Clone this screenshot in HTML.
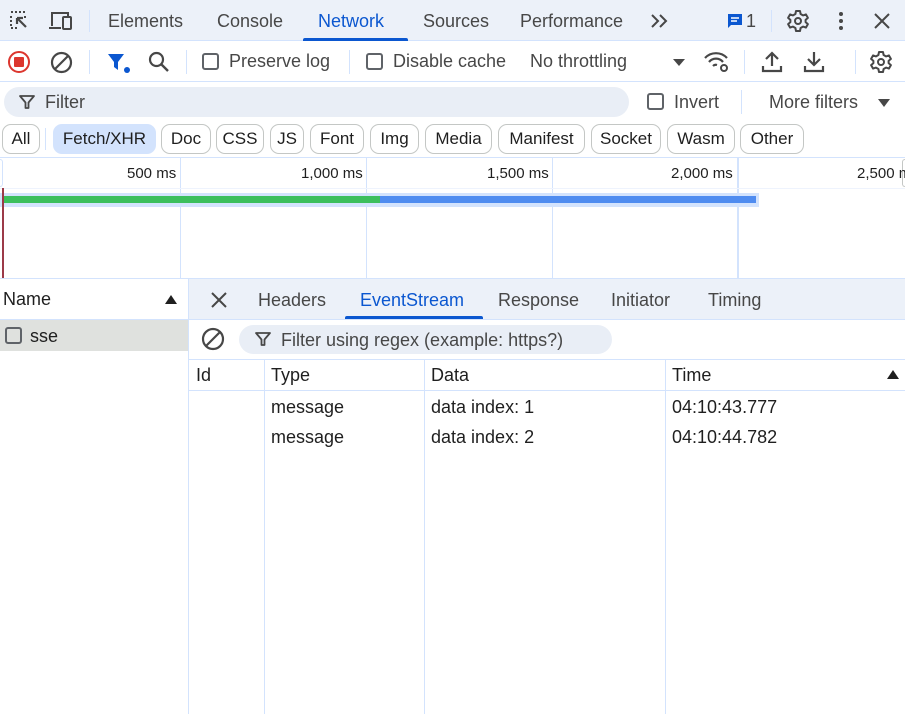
<!DOCTYPE html>
<html><head><meta charset="utf-8"><style>
*{box-sizing:border-box;margin:0;padding:0}
body{width:905px;height:714px;overflow:hidden;background:#fff;font-family:"Liberation Sans","Noto Sans CJK SC",sans-serif;color:#1f1f1f;position:relative;font-size:18px}
.a{position:absolute;white-space:nowrap}
.t{color:#474747}
.ln{position:absolute;background:#d3e3fd}
.chip{position:absolute;top:124px;height:30px;border:1px solid #c4c7c5;border-radius:9px;line-height:28px;font-size:17px;color:#1f1f1f;text-align:center;overflow:hidden}
.cb{position:absolute;width:17px;height:17px;border:2px solid #5f6368;border-radius:3px}
svg{position:absolute}
</style></head><body>
<!-- tab bar -->
<div class="a" style="left:0;top:0;width:905px;height:41px;background:#ecf1f9;border-bottom:1px solid #d3e3fd"></div>
<svg style="left:8px;top:9px" width="24" height="24" viewBox="0 0 24 24"><path d="M3 3h2M7 3h2M11 3h2M15 3h2M3 7v2M3 11v2M3 15v2M3 19h2M7 19h2M17 7v2" stroke="#474747" stroke-width="2" fill="none"/><path d="M9 9l9 9M9 9h6M9 9v6" stroke="#474747" stroke-width="2.2" fill="none"/></svg>
<svg style="left:48px;top:10px" width="26" height="22" viewBox="0 0 26 22"><path d="M4 16V3h16v3" stroke="#474747" stroke-width="2" fill="none"/><path d="M1 18h12" stroke="#474747" stroke-width="2"/><rect x="15" y="7" width="8" height="12" rx="1" stroke="#474747" stroke-width="2" fill="none"/></svg>
<div class="ln" style="left:89px;top:10px;width:1px;height:22px"></div>
<div class="a t" style="left:108px;top:11px">Elements</div>
<div class="a t" style="left:217px;top:11px">Console</div>
<div class="a" style="left:318px;top:11px;color:#0b57d0">Network</div>
<div class="a" style="left:303px;top:38px;width:105px;height:3px;background:#0b57d0;border-radius:2px 2px 0 0"></div>
<div class="a t" style="left:423px;top:11px">Sources</div>
<div class="a t" style="left:520px;top:11px">Performance</div>
<svg style="left:650px;top:14px" width="20" height="14" viewBox="0 0 20 14"><path d="M2 1l6 6-6 6M10 1l6 6-6 6" stroke="#474747" stroke-width="2" fill="none"/></svg>
<svg style="left:727px;top:13px" width="16" height="16" viewBox="0 0 16 16"><path d="M1 1h14v11H4l-3 3z" fill="#0b57d0"/><path d="M4 5h8M4 8h6" stroke="#fff" stroke-width="1.5"/></svg>
<div class="a t" style="left:746px;top:11px">1</div>
<div class="ln" style="left:771px;top:10px;width:1px;height:22px"></div>
<svg style="left:786px;top:9px" width="24" height="24" viewBox="0 0 24 24"><circle cx="12" cy="12" r="3" fill="none" stroke="#474747" stroke-width="2"/><path d="M10 2h4l.6 3 2.4 1.4 2.9-1 2 3.5-2.3 2v2.2l2.3 2-2 3.5-2.9-1L14.6 19 14 22h-4l-.6-3-2.4-1.4-2.9 1-2-3.5 2.3-2v-2.2l-2.3-2 2-3.5 2.9 1L9.4 5z" fill="none" stroke="#474747" stroke-width="2" stroke-linejoin="round"/></svg>
<div class="a" style="left:839px;top:12px;width:4px;height:4px;border-radius:50%;background:#474747;box-shadow:0 7px 0 #474747,0 14px 0 #474747"></div>
<svg style="left:873px;top:12px" width="18" height="18" viewBox="0 0 18 18"><path d="M2 2l14 14M16 2L2 16" stroke="#474747" stroke-width="2"/></svg>
<!-- toolbar -->
<div class="a" style="left:0;top:81px;width:905px;height:1px;background:#d3e3fd"></div>
<div class="a" style="left:8px;top:51px;width:22px;height:22px;border:2.5px solid #dc362e;border-radius:50%"></div>
<div class="a" style="left:14px;top:57px;width:10px;height:10px;background:#dc362e;border-radius:1px"></div>
<svg style="left:50px;top:51px" width="23" height="23" viewBox="0 0 23 23"><circle cx="11.5" cy="11.5" r="9.5" stroke="#474747" stroke-width="2.2" fill="none"/><path d="M5 18L18 5" stroke="#474747" stroke-width="2.2"/></svg>
<div class="ln" style="left:89px;top:50px;width:1px;height:24px"></div>
<svg style="left:107px;top:53px" width="24" height="22" viewBox="0 0 24 22"><path d="M1 1h16l-6 8v8l-4-3V9z" fill="#0b57d0"/><circle cx="20" cy="17" r="3" fill="#0b57d0"/></svg>
<svg style="left:148px;top:51px" width="22" height="22" viewBox="0 0 22 22"><circle cx="8.5" cy="8.5" r="6.5" stroke="#474747" stroke-width="2.2" fill="none"/><path d="M13 13l7 7" stroke="#474747" stroke-width="2.4"/></svg>
<div class="ln" style="left:186px;top:50px;width:1px;height:24px"></div>
<div class="cb" style="left:202px;top:53px"></div>
<div class="a t" style="left:229px;top:51px">Preserve log</div>
<div class="ln" style="left:349px;top:50px;width:1px;height:24px"></div>
<div class="cb" style="left:366px;top:53px"></div>
<div class="a t" style="left:393px;top:51px">Disable cache</div>
<div class="a t" style="left:530px;top:51px">No throttling</div>
<div class="a" style="left:673px;top:59px;border-left:6px solid transparent;border-right:6px solid transparent;border-top:7px solid #474747"></div>
<svg style="left:703px;top:50px" width="28" height="24" viewBox="0 0 28 24"><path d="M2 8a15 15 0 0 1 22 0M6 12a9 9 0 0 1 14 0M10 16a4 4 0 0 1 4-1" stroke="#474747" stroke-width="2.2" fill="none"/><circle cx="21" cy="18" r="3" stroke="#474747" stroke-width="2" fill="none"/></svg>
<div class="ln" style="left:744px;top:50px;width:1px;height:24px"></div>
<svg style="left:761px;top:50px" width="22" height="23" viewBox="0 0 22 23"><path d="M11 16V3M5 9l6-6 6 6M2 16v5h18v-5" stroke="#474747" stroke-width="2.2" fill="none"/></svg>
<svg style="left:803px;top:50px" width="22" height="23" viewBox="0 0 22 23"><path d="M11 2v13M5 9l6 6 6-6M2 16v5h18v-5" stroke="#474747" stroke-width="2.2" fill="none"/></svg>
<div class="ln" style="left:855px;top:50px;width:1px;height:24px"></div>
<svg style="left:869px;top:50px" width="24" height="24" viewBox="0 0 24 24"><circle cx="12" cy="12" r="3" fill="none" stroke="#474747" stroke-width="2"/><path d="M10 2h4l.6 3 2.4 1.4 2.9-1 2 3.5-2.3 2v2.2l2.3 2-2 3.5-2.9-1L14.6 19 14 22h-4l-.6-3-2.4-1.4-2.9 1-2-3.5 2.3-2v-2.2l-2.3-2 2-3.5 2.9 1L9.4 5z" fill="none" stroke="#474747" stroke-width="2" stroke-linejoin="round"/></svg>
<!-- filter row -->
<div class="a" style="left:4px;top:87px;width:625px;height:30px;background:#e9eef6;border-radius:15px"></div>
<svg style="left:19px;top:94px" width="16" height="16" viewBox="0 0 16 16"><path d="M1 2h14l-5.5 6.5V14h-3V8.5z" fill="none" stroke="#474747" stroke-width="1.8" stroke-linejoin="round"/></svg>
<div class="a t" style="left:45px;top:92px">Filter</div>
<div class="cb" style="left:647px;top:93px"></div>
<div class="a t" style="left:674px;top:92px">Invert</div>
<div class="ln" style="left:741px;top:90px;width:1px;height:24px"></div>
<div class="a t" style="left:769px;top:92px">More filters</div>
<div class="a" style="left:878px;top:99px;border-left:6px solid transparent;border-right:6px solid transparent;border-top:8px solid #474747"></div>
<!-- chips -->
<div class="chip" style="left:2px;width:38px">All</div>
<div class="ln" style="left:45px;top:128px;width:1px;height:22px"></div>
<div class="chip" style="left:53px;width:103px;background:#d3e3fd;border-color:#d3e3fd">Fetch/XHR</div>
<div class="chip" style="left:161px;width:50px">Doc</div>
<div class="chip" style="left:216px;width:48px">CSS</div>
<div class="chip" style="left:270px;width:34px">JS</div>
<div class="chip" style="left:310px;width:54px">Font</div>
<div class="chip" style="left:370px;width:49px">Img</div>
<div class="chip" style="left:425px;width:67px">Media</div>
<div class="chip" style="left:498px;width:87px">Manifest</div>
<div class="chip" style="left:591px;width:70px">Socket</div>
<div class="chip" style="left:667px;width:68px">Wasm</div>
<div class="chip" style="left:740px;width:64px">Other</div>
<div class="a" style="left:0;top:157px;width:905px;height:1px;background:#d3e3fd"></div>
<!-- timeline -->
<div class="ln" style="left:180px;top:158px;width:1px;height:120px"></div>
<div class="ln" style="left:366px;top:158px;width:1px;height:120px"></div>
<div class="ln" style="left:552px;top:158px;width:1px;height:120px"></div>
<div class="ln" style="left:737px;top:158px;width:2px;height:120px"></div>
<div class="ln" style="left:0;top:188px;width:905px;height:1px;background:#eef3fd"></div>
<div class="a" style="left:0;top:159px;width:3px;height:28px;border:1px solid #d3e3fd;border-left:0;border-radius:0 3px 3px 0"></div>
<div class="a" style="left:902px;top:159px;width:3px;height:28px;border:1px solid #c4c7c5;border-right:0;border-radius:3px 0 0 3px"></div>
<div class="a" style="left:127px;top:165px;font-size:15px">500 ms</div>
<div class="a" style="left:301px;top:165px;font-size:15px">1,000 ms</div>
<div class="a" style="left:487px;top:165px;font-size:15px">1,500 ms</div>
<div class="a" style="left:671px;top:165px;font-size:15px">2,000 ms</div>
<div class="a" style="left:857px;top:165px;font-size:15px">2,500 ms</div>
<div class="a" style="left:0;top:193px;width:759px;height:14px;background:#d3e3fd"></div>
<div class="a" style="left:3px;top:196px;width:377px;height:7px;background:#3cbf5d"></div>
<div class="a" style="left:380px;top:196px;width:376px;height:7px;background:#4f8cf0"></div>
<div class="a" style="left:2px;top:188px;width:2px;height:90px;background:#9c3a48"></div>
<div class="a" style="left:0;top:278px;width:905px;height:1px;background:#d3e3fd"></div>
<!-- left panel -->
<div class="a" style="left:3px;top:289px">Name</div>
<div class="a" style="left:165px;top:295px;border-left:6px solid transparent;border-right:6px solid transparent;border-bottom:9px solid #1f1f1f"></div>
<div class="a" style="left:0;top:319px;width:188px;height:1px;background:#d3e3fd"></div>
<div class="a" style="left:0;top:320px;width:188px;height:31px;background:#dfe1de"></div>
<div class="cb" style="left:5px;top:327px"></div>
<div class="a" style="left:30px;top:326px">sse</div>
<div class="a" style="left:188px;top:279px;width:1px;height:435px;background:#d3e3fd"></div>
<!-- right tabs -->
<div class="a" style="left:189px;top:279px;width:716px;height:41px;background:#ecf1f9;border-bottom:1px solid #d3e3fd"></div>
<svg style="left:211px;top:292px" width="16" height="16" viewBox="0 0 16 16"><path d="M1 1l14 14M15 1L1 15" stroke="#474747" stroke-width="2"/></svg>
<div class="a t" style="left:258px;top:290px">Headers</div>
<div class="a" style="left:360px;top:290px;color:#0b57d0">EventStream</div>
<div class="a" style="left:345px;top:316px;width:138px;height:3px;background:#0b57d0;border-radius:2px 2px 0 0"></div>
<div class="a t" style="left:498px;top:290px">Response</div>
<div class="a t" style="left:611px;top:290px">Initiator</div>
<div class="a t" style="left:708px;top:290px">Timing</div>
<svg style="left:201px;top:327px" width="24" height="24" viewBox="0 0 24 24"><circle cx="12" cy="12" r="10" stroke="#474747" stroke-width="2.2" fill="none"/><path d="M5 19L19 5" stroke="#474747" stroke-width="2.2"/></svg>
<div class="a" style="left:239px;top:325px;width:373px;height:29px;background:#e9eef6;border-radius:15px"></div>
<svg style="left:255px;top:331px" width="16" height="16" viewBox="0 0 16 16"><path d="M1 2h14l-5.5 6.5V14h-3V8.5z" fill="none" stroke="#474747" stroke-width="1.8" stroke-linejoin="round"/></svg>
<div class="a t" style="left:281px;top:330px">Filter using regex (example: https?)</div>
<div class="a" style="left:189px;top:359px;width:716px;height:1px;background:#d3e3fd"></div>
<div class="a" style="left:189px;top:390px;width:716px;height:1px;background:#d3e3fd"></div>
<div class="ln" style="left:264px;top:360px;width:1px;height:354px"></div>
<div class="ln" style="left:424px;top:360px;width:1px;height:354px"></div>
<div class="ln" style="left:665px;top:360px;width:1px;height:354px"></div>
<div class="a" style="left:196px;top:365px">Id</div>
<div class="a" style="left:271px;top:365px">Type</div>
<div class="a" style="left:431px;top:365px">Data</div>
<div class="a" style="left:672px;top:365px">Time</div>
<div class="a" style="left:887px;top:370px;border-left:6px solid transparent;border-right:6px solid transparent;border-bottom:9px solid #1f1f1f"></div>
<div class="a" style="left:271px;top:397px">message</div>
<div class="a" style="left:431px;top:397px">data index: 1</div>
<div class="a" style="left:672px;top:397px">04:10:43.777</div>
<div class="a" style="left:271px;top:427px">message</div>
<div class="a" style="left:431px;top:427px">data index: 2</div>
<div class="a" style="left:672px;top:427px">04:10:44.782</div>
</body></html>
